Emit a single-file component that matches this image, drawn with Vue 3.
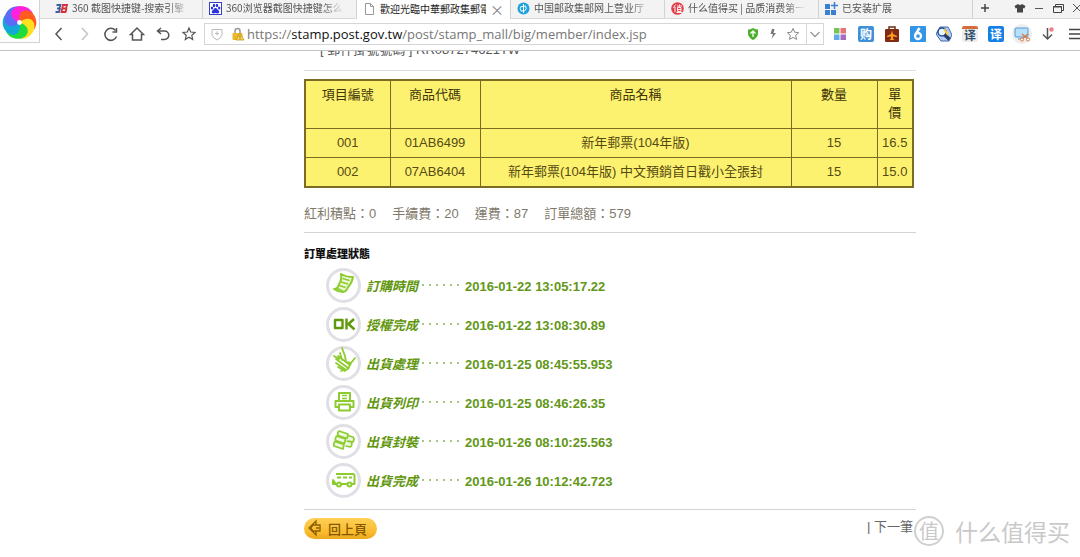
<script setup>
import { ref } from 'vue'

const url = ref('https://stamp.post.gov.tw/post/stamp_mall/big/member/index.jsp')

const tabs = [
  { id: 'so', title: '360 截图快捷键-搜索引擎' },
  { id: 'baidu', title: '360浏览器截图快捷键怎么' },
  { id: 'page', title: '歡迎光臨中華郵政集郵電', active: true },
  { id: 'post', title: '中国邮政集邮网上营业厅' },
  { id: 'smzdm', title: '什么值得买 | 品质消费第一' },
  { id: 'ext', title: '已安装扩展' },
]

const items = [
  { no: '001', code: '01AB6499', name: '新年郵票(104年版)', qty: '15', price: '16.5' },
  { no: '002', code: '07AB6404', name: '新年郵票(104年版) 中文預銷首日戳小全張封', qty: '15', price: '15.0' },
]

const totals = [
  { label: '紅利積點', value: '0' },
  { label: '手續費', value: '20' },
  { label: '運費', value: '87' },
  { label: '訂單總額', value: '579' },
]

const steps = [
  { id: 'order', label: '訂購時間', time: '2016-01-22 13:05:17.22' },
  { id: 'ok', label: '授權完成', time: '2016-01-22 13:08:30.89' },
  { id: 'hand', label: '出貨處理', time: '2016-01-25 08:45:55.953' },
  { id: 'print', label: '出貨列印', time: '2016-01-25 08:46:26.35' },
  { id: 'pack', label: '出貨封裝', time: '2016-01-26 08:10:25.563' },
  { id: 'van', label: '出貨完成', time: '2016-01-26 10:12:42.723' },
]

const petals = ['#ff22dd', '#ff5a1f', '#ffe01f', '#1fdc3c', '#12a9d8', '#5a6cf5']
</script>

<template>
  <div class="browser">
    <header class="chrome">
      <button class="logo" aria-label="360">
        <svg viewBox="-18 -18 36 36">
          <path
            v-for="(c, i) in petals"
            :key="c"
            :fill="c"
            :transform="`rotate(${i * 60})`"
            d="M0 0C-7-2-11-8-7-13C-2-19 10-18 14-9C9-11 1-8 0 0Z"
          />
          <path :fill="petals[0]" d="M0 0C-7-2-11-8-7-13C-5-16-1-17 3-17C-3-14-5-6 0 0Z" />
          <circle r="2.500" fill="#fff" />
        </svg>
      </button>

      <nav class="tabs">
        <a v-for="t in tabs" :key="t.id" href="#" class="tab" :class="{ active: t.active }">
          <svg class="favicon" viewBox="0 0 13 13">
            <template v-if="t.id === 'so'">
              <path d="M1.500 3h4l-1 3 .5.500-1 3.500H.500M2 6.500h3" fill="none" stroke="#3f5da0" stroke-width="1.800" />
              <path d="M8 3h4l-1 3.500.5.500-1 3H6.500zM7.500 6.500H11" fill="none" stroke="#d5333c" stroke-width="1.800" />
            </template>
            <template v-else-if="t.id === 'baidu'">
              <rect x=".5" y=".5" width="12" height="12" fill="#fff" stroke="#3940c8" />
              <path d="M6.500 6C8 6 8.500 8 10 9c1 2-1 3-3.500 2C4 12 2 11 3 9c1.500-1 2-3 3.500-3" fill="#2932e1" />
              <ellipse cx="3" cy="6" rx="1.200" ry="1.600" fill="#2932e1" />
              <ellipse cx="5" cy="3.500" rx="1.200" ry="1.700" fill="#2932e1" />
              <ellipse cx="8" cy="3.500" rx="1.200" ry="1.700" fill="#2932e1" />
              <ellipse cx="10.200" cy="6" rx="1.200" ry="1.600" fill="#2932e1" />
            </template>
            <path v-else-if="t.id === 'page'" d="M2.500 1.500h5l3 3v8h-8zM7.500 1.500v3h3" fill="#fff" stroke="#999" />
            <template v-else-if="t.id === 'post'">
              <circle cx="6.500" cy="6.500" r="6" fill="#1ba4dc" />
              <path d="M6.500 2v9M4 4.500Q2.500 6.500 4 9h3.500q3-2.500 1-5z" fill="none" stroke="#fff" />
            </template>
            <template v-else-if="t.id === 'smzdm'">
              <circle cx="6.500" cy="6.500" r="6.300" fill="#e0414b" />
              <path d="M4.500 2.500L2.500 6M4 5v5M6 4h5M8.500 2.500v2M6.500 5.500h3.500v4H6.500zM6.500 7.500H10M5.500 10.500h5.500" fill="none" stroke="#fff" stroke-width=".9" />
            </template>
            <template v-else>
              <path d="M0 2h5v5H0zM0 8h5v5H0zM6 8h5v5H6z" fill="#3b7fd0" />
              <path d="M9.500 0v7M6 3.500h7" stroke="#3b7fd0" stroke-width="1.500" />
            </template>
          </svg>
          <span class="tab-title">{{ t.title }}</span>
          <span v-if="t.active" class="tab-close">×</span>
        </a>
        <button class="new-tab" aria-label="新标签">
          <svg width="10" height="10" viewBox="0 0 10 10"><path d="M5 1v8M1 5h8" stroke="#444" stroke-width="1.500" /></svg>
        </button>
        <div class="window-buttons">
          <button aria-label="皮肤"><svg viewBox="0 0 12 12"><path d="M4 2Q6 4 8 2l3.500 2-1.200 2.500L9 6v4.500H3V6l-1.300.5L.500 4z" fill="#444" /></svg></button>
          <button aria-label="最小化"><svg viewBox="0 0 12 12"><path d="M2 6.500h8" stroke="#555" /></svg></button>
          <button aria-label="还原"><svg viewBox="0 0 12 12"><path d="M1.500 4.500h8v6h-8zM1 5h9M3.500 4V2.500h8v6H10" fill="none" stroke="#444" /></svg></button>
          <button aria-label="关闭"><svg viewBox="0 0 12 12"><path d="M2 2l8 8M10 2l-8 8" stroke="#555" /></svg></button>
        </div>
      </nav>

      <div class="toolbar">
        <div class="nav-buttons">
          <button aria-label="后退"><svg viewBox="0 0 16 16"><path d="M10.500 2L5 8l5.500 6" /></svg></button>
          <button aria-label="前进" disabled><svg viewBox="0 0 16 16"><path d="M5 2l5.500 6L5 14" /></svg></button>
          <button aria-label="刷新"><svg viewBox="0 0 16 16"><path d="M13.500 10.500A6 6 0 1 1 12.500 4.500M13.500 2v4H9.500" /></svg></button>
          <button aria-label="主页"><svg viewBox="0 0 16 16"><path d="M1.500 8.500L8 2l6.500 6.500H12.500V14h-9V8.500z" /></svg></button>
          <button aria-label="恢复"><svg viewBox="0 0 16 16"><path d="M6 2L2.500 5 6 8M3 5h6.500a4.300 4.300 0 0 1 0 8.600H6" /></svg></button>
          <button aria-label="收藏"><svg class="thin" viewBox="0 0 16 16"><path d="M8 2l1.700 4 4.300.4-3.200 2.900.9 4.200L8 11.300l-3.700 2.200.9-4.200L2 6.400 6.300 6z" /></svg></button>
        </div>

        <div class="address">
          <svg class="site-icon" viewBox="0 0 14 14"><path d="M2 2.500h10V8q-1.500 3.500-5 5-3.500-1.500-5-5zM7 4.500v4M5 6.500h4" fill="none" stroke="#bbb" /></svg>
          <svg class="site-icon lock" viewBox="0 0 14 14">
            <path d="M4 6V4a2.500 2.500 0 0 1 5 0v2" fill="none" stroke="#999" stroke-width="1.500" />
            <rect x="1.500" y="6" width="10" height="7" rx="1" fill="#edb72d" />
            <path d="M9 6l4 7H5z" fill="#ffdb4d" stroke="#b98a1c" stroke-width=".7" />
            <path d="M9 8.500v2M9 11.300v1" stroke="#664" />
          </svg>
          <label class="url">
            <span class="url-view" aria-hidden="true">https://<b>stamp.post.gov.tw</b>/post/stamp_mall/big/member/index.jsp</span>
            <input v-model="url" type="text" aria-label="网址" />
          </label>
          <svg class="tail" viewBox="0 0 14 14"><path d="M7 1q2.500 1.500 5 1.500V7q-1 4-5 6-4-2-5-6V2.500Q4.500 2.500 7 1" fill="#4caf2c" /><path d="M7 10V4.500M4.500 6.500L7 4l2.500 2.500" fill="none" stroke="#fff" stroke-width="1.300" /></svg>
          <svg class="tail" viewBox="0 0 14 14"><path d="M8.500 2H6L4.500 7H7l-1.500 5L10 6H7.500z" fill="#777" /></svg>
          <svg class="tail" viewBox="0 0 14 14"><path d="M7 1.500l1.700 3.700 4 .5-3 2.700.8 4L7 10.400l-3.500 2 .8-4-3-2.700 4-.5z" fill="none" stroke="#888" /></svg>
          <button class="drop" aria-label="历史"><svg viewBox="0 0 14 14"><path d="M2.500 5L7 9.500 11.500 5" fill="none" stroke="#999" stroke-width="1.300" /></svg></button>
        </div>

        <div class="extensions">
          <button aria-label="应用"><svg viewBox="0 0 16 16"><path d="M2 2h5.500v5.500H2z" fill="#79c257" /><path d="M8.500 2H14v5.500H8.500z" fill="#e8737d" /><path d="M2 8.500h5.500V14H2z" fill="#65a9e8" /><path d="M8.500 8.500H14V14H8.500z" fill="#a46fc0" /></svg></button>
          <button aria-label="购物"><span class="badge">购</span></button>
          <button aria-label="旅行"><svg viewBox="0 0 16 16"><path d="M5 3V1h6v2" fill="none" stroke="#6b2a12" stroke-width="1.500" /><rect x="1" y="3" width="14" height="13" rx="1" fill="#802b11" /><path d="M8 4.500l1 3.500 4 2v1l-4-.5v2l1.500 1.500h-5L7 12.500v-2L3 11v-1l4-2z" fill="#ff9c25" /></svg></button>
          <button aria-label="天气"><svg viewBox="0 0 16 16"><rect width="16" height="16" rx="1" fill="#3295e7" /><path d="M9.500 2L5.500 8.500" stroke="#fff" stroke-width="2.500" /><circle cx="8" cy="10" r="3" fill="none" stroke="#fff" stroke-width="2.300" /></svg></button>
          <button aria-label="搜索"><svg viewBox="0 0 16 16"><path d="M4 1h8l4 8-3 6H5L0 8z" fill="#b3cff2" stroke="#4266ac" /><circle cx="6" cy="6" r="4" fill="#e6f7ff" stroke="#244d9b" stroke-width="1.500" /><path d="M8.500 8.500l5 5" stroke="#263c71" stroke-width="3.500" /><path d="M8 3l4 6" stroke="#ffc835" stroke-width="2" /></svg></button>
          <button aria-label="网页翻译"><span class="badge paper">译</span></button>
          <button aria-label="翻译"><span class="badge blue">译</span></button>
          <button class="round" aria-label="截图"><svg viewBox="0 0 16 16"><rect x="1" y="2" width="13" height="9" rx="1" fill="#b7e0fb" stroke="#5599d8" /><path d="M4 13h5" stroke="#5599d8" /><path d="M8 8l6 5M14 8l-6 5" stroke="#d67b3f" stroke-width="1.300" /><circle cx="8" cy="13.500" r="1.600" fill="#fff" stroke="#d67b3f" /><circle cx="14" cy="13.500" r="1.600" fill="#fff" stroke="#d67b3f" /></svg></button>
          <button aria-label="下载"><svg viewBox="0 0 16 16"><path d="M7.500 2v11M3 8.500L7.500 13 12 8.500" fill="none" stroke="#555" stroke-width="1.500" /><circle cx="11.500" cy="3.500" r="2.200" fill="#ee7e88" /></svg></button>
          <button aria-label="菜单"><svg viewBox="0 0 16 16"><path d="M3 3.500h13M3 8h13M3 12.500h13" stroke="#444" stroke-width="1.500" /></svg></button>
        </div>
      </div>
    </header>

    <main class="page">
      <div class="content">
        <div class="mail"><p>[ 郵件掛號號碼 ] RR087274621TW</p></div>

        <table>
          <colgroup><col class="c-no" /><col class="c-code" /><col /><col class="c-qty" /><col class="c-price" /></colgroup>
          <thead>
            <tr><th>項目編號</th><th>商品代碼</th><th>商品名稱</th><th>數量</th><th class="narrow">單價</th></tr>
          </thead>
          <tbody>
            <tr v-for="r in items" :key="r.no">
              <td>{{ r.no }}</td><td>{{ r.code }}</td><td>{{ r.name }}</td><td>{{ r.qty }}</td><td>{{ r.price }}</td>
            </tr>
          </tbody>
        </table>

        <div class="totals">
          <span v-for="t in totals" :key="t.label">{{ t.label }}：{{ t.value }}</span>
        </div>

        <section class="status">
          <h2>訂單處理狀態</h2>
          <ul>
            <li v-for="s in steps" :key="s.id">
              <span class="ring">
                <svg viewBox="0 0 24 24" fill="none" stroke="#8dcc30" stroke-width="2" stroke-linejoin="round">
                  <template v-if="s.id === 'order'">
                    <path d="M9 1q5 3 12 3-1 6-5 10-1 4-5 5-5 0-9-3 4 0 5-5 3-4 2-10z" fill="#eaf7d2" />
                    <path d="M10.500 5.500l7 2M9 9l7 2M7.500 12.500l6 2M3 16q5-1 8 3" stroke-width="1.500" />
                  </template>
                  <path v-else-if="s.id === 'ok'" d="M3 8h7.500v8H3zM14.500 6.500v11M22 7l-5.500 5 6 5.500" stroke="#5f9a0a" stroke-width="2.400" />
                  <path v-else-if="s.id === 'hand'" d="M10-3l3 8 1 6 5 1 4-5M2 5l5 3M6 5l12 9M4 8l12 9M4 12l10 7M6 16l7 4M19 12l-3 6-7 2M8 2l2 7" stroke-width="1.800" stroke-linecap="round" />
                  <template v-else-if="s.id === 'print'">
                    <path d="M7 11V3h11v8M7 17H3.500v-6h18v6H18M7 14.500h11v6H7z" />
                    <path d="M10 5.500h5M10 8.500h5" stroke-width="1.500" />
                  </template>
                  <path v-else-if="s.id === 'pack'" d="M7 2l9 3-1 4.500-9-3Q5 4 7 2zM4.500 7l9 3-1 4.500-9-3Q3 9 4.500 7zM3 12.500l9 3-1 4.500-9-3Q1 15 3 12.500zM16 6.500l5 1.500q2 2 0 5l-5-1M14.500 12l5 1q1 3-1 5l-5-1" fill="#eef8dc" stroke-width="1.700" />
                  <template v-else>
                    <path d="M4 6h17q1.500 0 1.500 1.500V16H20M15 16H9.500M4 16H1v-4z" />
                    <path d="M5 9.500h4M11 9.500h4M17 9.500h3" stroke-width="2" />
                    <circle cx="7" cy="16.500" r="2" /><circle cx="17.500" cy="16.500" r="2" />
                  </template>
                </svg>
              </span>
              <span class="label">{{ s.label }}</span>
              <span class="dots"><i v-for="n in 6" :key="n"></i></span>
              <time>{{ s.time }}</time>
            </li>
          </ul>
        </section>

        <footer>
          <button class="back">
            <svg viewBox="0 0 18 18"><path d="M10 2L3 9l7 7v-4H7l-2-3 2-3h3zM9 6h5v2M9 12h5v-2M10 9h5" fill="none" stroke="#8d5f00" stroke-width="1.300" /></svg>
            回上頁
          </button>
          <a href="#" class="next">| 下一筆</a>
        </footer>
      </div>
      <div class="watermark"><span class="seal">值</span><span>什么值得买</span></div>
    </main>
  </div>
</template>

<style>
body {
  background: #fff;
  overflow: hidden;
}
</style>

<style scoped>
* {
  box-sizing: border-box;
}
.browser {
  position: relative;
  min-height: 100vh;
  overflow: hidden;
  font-family: "Liberation Sans", "Noto Sans CJK TC", sans-serif;
  font-size: 13px;
}
button {
  display: flex;
  align-items: center;
  justify-content: center;
  padding: 0;
  border: 0;
  background: none;
  font: inherit;
  color: inherit;
}
svg {
  display: block;
  flex: none;
}
.chrome {
  position: relative;
  border-bottom: 1px solid #c4c4c4;
}
.logo {
  position: absolute;
  left: 0;
  top: 0;
  width: 40px;
  height: 43px;
  border: solid #d2d2d2;
  border-width: 0 1px 1px 0;
  background: #fdfdfd;
}
.logo svg {
  width: 35px;
  height: 35px;
  margin-top: 3px;
}
.tabs {
  display: flex;
  height: 19px;
  padding-left: 49px;
  background: #f3f3f3;
  border-bottom: 1px solid #d9d9d9;
  font-family: "Noto Sans CJK SC", sans-serif;
  font-size: 10px;
}
.tab {
  display: flex;
  flex: 0 1 154px;
  align-items: center;
  gap: 4px;
  min-width: 0;
  height: 18px;
  padding: 0 6px 2px;
  border-right: 1px solid #d2d2d2;
  color: #555;
  text-decoration: none;
}
.tab.active {
  height: 19px;
  background: #fff;
  color: #222;
}
.favicon {
  width: 13px;
  height: 13px;
}
.tab-title {
  flex: 0 1 auto;
  overflow: hidden;
  white-space: nowrap;
  line-height: 16px;
  mask-image: linear-gradient(90deg, #000 96px, transparent 118px);
}
.active .tab-title {
  mask-image: none;
}
.tab-close {
  font-size: 14px;
  line-height: 16px;
  color: #888;
}
.new-tab {
  width: 24px;
  height: 15px;
}
.window-buttons {
  display: flex;
  gap: 7px;
  height: 16px;
  margin-left: auto;
  margin-right: -3px;
}
.window-buttons svg {
  width: 12px;
  height: 12px;
}
.toolbar {
  display: flex;
  align-items: center;
  height: 31px;
  padding: 0 0 2px 46px;
}
.nav-buttons,
.extensions {
  display: flex;
  align-items: center;
}
.nav-buttons button,
.extensions button {
  width: 26px;
  height: 26px;
}
.nav-buttons svg {
  width: 16px;
  height: 16px;
  fill: none;
  stroke: #555;
  stroke-width: 1.5;
}
.nav-buttons .thin {
  stroke-width: 1.2;
}
.nav-buttons button:disabled {
  opacity: 0.35;
}
.address {
  display: flex;
  flex: 1;
  align-items: center;
  min-width: 0;
  height: 22px;
  margin-left: 2px;
  border: 1px solid #d6d6d6;
}
.site-icon {
  width: 14px;
  height: 14px;
  margin-left: 5px;
}
.site-icon.lock {
  margin: 0 2px 0 7px;
}
.url {
  display: grid;
  flex: 1;
  min-width: 0;
  font-family: "Open Sans", sans-serif;
  font-size: 13px;
  line-height: 20px;
}
.url > * {
  grid-area: 1 / 1;
  min-width: 0;
}
.url-view {
  color: #777;
  white-space: nowrap;
  overflow: hidden;
}
.url-view b {
  font-weight: 400;
  color: #111;
}
.url input {
  width: 100%;
  padding: 0;
  border: 0;
  outline: 0;
  background: none;
  color: transparent;
  caret-color: #111;
  font: inherit;
}
.tail {
  width: 14px;
  height: 14px;
  margin-right: 6px;
}
.drop {
  width: 17px;
  height: 20px;
  border-left: 1px solid #d6d6d6;
}
.drop svg {
  width: 14px;
  height: 14px;
}
.extensions {
  margin-left: 3px;
  margin-right: -7px;
}
.extensions svg {
  width: 16px;
  height: 16px;
}
.extensions .round {
  width: 20px;
  height: 20px;
  margin: 0 3px;
  border-radius: 50%;
  background: #eee;
}
.badge {
  width: 16px;
  height: 16px;
  border-radius: 2px;
  background: #408fd9;
  color: #fff;
  font: 700 12px/15px "Noto Sans CJK SC", sans-serif;
}
.badge.blue {
  background: #167fe5;
}
.badge.paper {
  border-top: 3px solid #d66c3b;
  background: #eee;
  color: #34506a;
  line-height: 12px;
}
.page {
  padding: 0 164px 0 304px;
}
.content {
  max-width: 612px;
}
.mail {
  height: 20px;
  overflow: hidden;
  border-bottom: 1px solid #ddd;
}
.mail p {
  margin: -10px 0 0 16px;
  line-height: 18px;
  color: #555;
}
table {
  width: calc(100% - 2px);
  margin-top: 8px;
  border: 2px solid #7b6c24;
  border-collapse: collapse;
  table-layout: fixed;
  background: #fdf26f;
  color: #554a13;
  text-align: center;
}
.c-no {
  width: 85px;
}
.c-code {
  width: 90px;
}
.c-qty {
  width: 86px;
}
.c-price {
  width: 36px;
}
th,
td {
  padding: 5px 3px;
  border: 1px solid #7b6c24;
  line-height: 18px;
  font-weight: 400;
}
th {
  height: 48px;
  vertical-align: top;
  color: #3f3509;
}
th.narrow {
  padding: 5px 10px;
}
td {
  height: 29px;
}
.totals {
  display: flex;
  gap: 16px;
  height: 45px;
  align-items: center;
  padding-top: 6px;
  border-bottom: 1px solid #d4d4d4;
  color: #80796a;
}
.status {
  padding: 12px 0 11px;
  border-bottom: 1px solid #d4d4d4;
}
h2 {
  margin: 0;
  font-size: 11px;
  line-height: 18px;
  font-weight: 900;
  color: #111;
}
ul {
  display: grid;
  gap: 4px;
  margin: 5px 0 0;
  padding: 0 0 0 22px;
  list-style: none;
}
li {
  display: flex;
  align-items: center;
  height: 35px;
  font-weight: 700;
  color: #629718;
}
.ring {
  display: flex;
  align-items: center;
  justify-content: center;
  width: 35px;
  height: 35px;
  border: 3px solid #e0dfe5;
  border-radius: 50%;
}
.ring svg {
  width: 24px;
  height: 24px;
  overflow: visible;
}
.label {
  margin-left: 5px;
  font-style: italic;
  color: #5f960c;
}
.dots {
  display: flex;
  gap: 5px;
  width: 43px;
  margin-left: 4px;
}
.dots i {
  width: 2px;
  height: 2px;
  border-radius: 1px;
  background: #8bb05a;
}
time {
  padding-top: 2px;
}
footer {
  display: flex;
  align-items: flex-start;
  justify-content: space-between;
  padding: 8px 3px 0 0;
}
.back {
  gap: 4px;
  height: 21px;
  padding: 0 10px 0 2px;
  border-radius: 11px;
  background: linear-gradient(#ffd057, #f9ba2c 70%, #eba81d);
  color: #835800;
  font-weight: 500;
}
.back svg {
  width: 18px;
  height: 18px;
}
.next {
  line-height: 18px;
  color: #666;
  text-decoration: none;
}
.watermark {
  position: absolute;
  right: 10px;
  bottom: 11px;
  display: flex;
  align-items: center;
  gap: 11px;
  font: 23px/30px "Noto Sans CJK SC", sans-serif;
  color: #c9c9c9;
}
.seal {
  width: 30px;
  height: 30px;
  border: 2px solid #d0d0d0;
  border-radius: 50%;
  font-size: 20px;
  line-height: 25px;
  text-align: center;
}
</style>
